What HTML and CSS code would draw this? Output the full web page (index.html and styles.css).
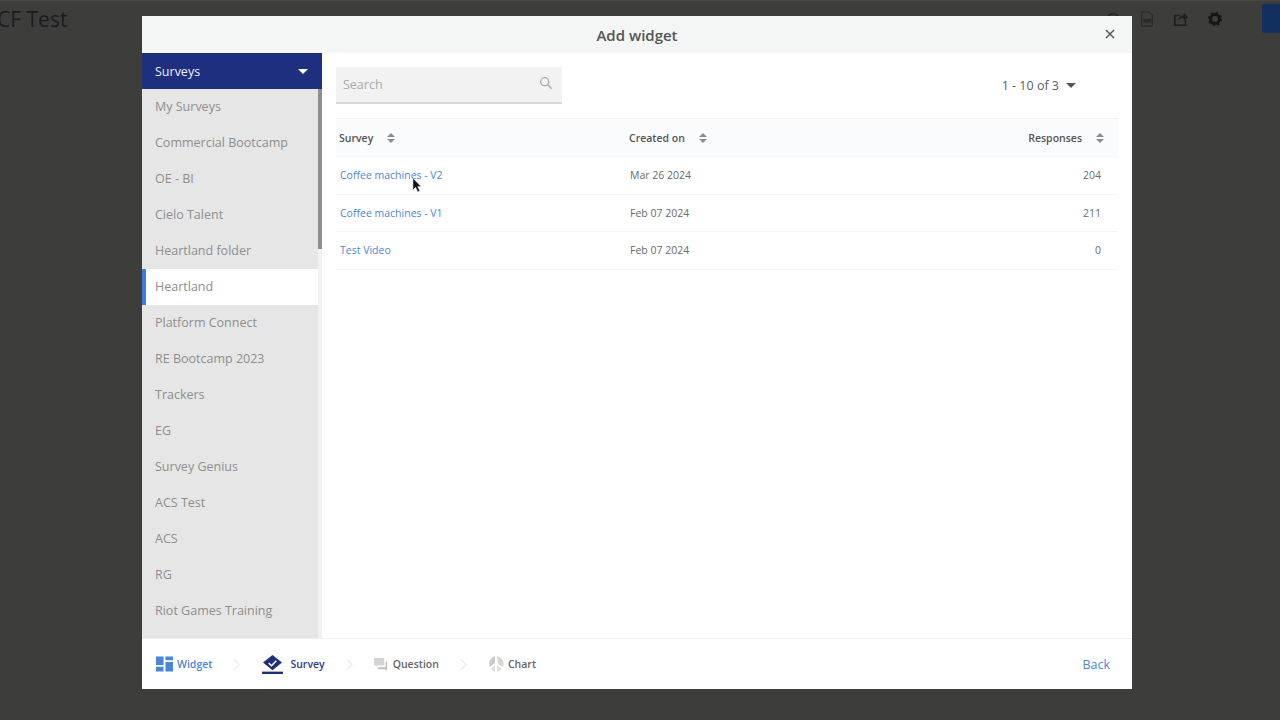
FILE: index.html
```html
<!DOCTYPE html>
<html lang="en">
<head>
<meta charset="utf-8">
<title>Add widget</title>
<link rel="stylesheet" href="styles.css">
</head>
<body>
<header class="topbar">
  <h1 class="page-title">CF Test</h1>
  <div class="top-actions">
    <svg class="top-icon" viewBox="0 0 18 18"><circle cx="9" cy="9" r="6" fill="none" stroke="#262626" stroke-width="2"/></svg>
    <svg class="top-icon" viewBox="0 0 18 18"><path d="M3 1h8l4 4v12H3z" fill="none" stroke="#2a2a2a" stroke-width="1.5"/><path d="M5 9h9v4H5z" fill="#2a2a2a"/></svg>
    <svg class="top-icon" viewBox="0 0 18 18"><path d="M14 10v6H2V5h6" fill="none" stroke="#1f1f1f" stroke-width="1.8"/><path d="M6 11c0-4 3-6 6-6V2l5 5-5 4V8c-3 0-5 1-6 3z" fill="#1f1f1f"/></svg>
    <svg class="top-icon" viewBox="0 0 18 18"><circle cx="9" cy="9" r="5" fill="none" stroke="#161616" stroke-width="3.4"/><circle cx="9" cy="9" r="7" fill="none" stroke="#161616" stroke-width="2" stroke-dasharray="2.6 2.9"/></svg>
    <div class="top-button"></div>
  </div>
</header>

<div class="overlay">
  <section class="modal">
    <header class="modal-head">
      <h2 class="modal-title">Add widget</h2>
      <svg class="close" viewBox="0 0 10 10"><path d="M1 1l8 8M9 1l-8 8" stroke="#555" stroke-width="1.5" fill="none"/></svg>
    </header>
    <div class="modal-body">
      <aside class="sidebar">
        <div class="side-head"><span>Surveys</span><i class="caret caret-white"></i></div>
        <div class="side-scroll">
          <ul class="side-list">
            <li class="side-item">My Surveys</li>
            <li class="side-item">Commercial Bootcamp</li>
            <li class="side-item">OE - BI</li>
            <li class="side-item">Cielo Talent</li>
            <li class="side-item">Heartland folder</li>
            <li class="side-item active">Heartland</li>
            <li class="side-item">Platform Connect</li>
            <li class="side-item">RE Bootcamp 2023</li>
            <li class="side-item">Trackers</li>
            <li class="side-item">EG</li>
            <li class="side-item">Survey Genius</li>
            <li class="side-item">ACS Test</li>
            <li class="side-item">ACS</li>
            <li class="side-item">RG</li>
            <li class="side-item">Riot Games Training</li>
          </ul>
          <div class="scrollbar"><div class="thumb"></div></div>
        </div>
      </aside>
      <main class="content">
        <div class="toolbar">
          <div class="search">
            <span>Search</span>
            <svg class="search-icon" viewBox="0 0 16 16"><circle cx="6.5" cy="6.5" r="4.6" fill="none" stroke="#a9a9a9" stroke-width="1.5"/><path d="M10 10l4.5 4.5" stroke="#a9a9a9" stroke-width="1.8"/></svg>
          </div>
          <div class="pager"><span>1 - 10 of 3</span><i class="caret caret-dark"></i></div>
        </div>
        <div class="table">
          <div class="row row-head">
            <div class="col-a">Survey<i class="sort"></i></div>
            <div class="col-b">Created on<i class="sort"></i></div>
            <div class="col-c">Responses<i class="sort"></i></div>
          </div>
          <div class="row">
            <div class="col-a"><a class="link">Coffee machines - V2</a></div>
            <div class="col-b date">Mar 26 2024</div>
            <div class="col-c num">204</div>
          </div>
          <div class="row">
            <div class="col-a"><a class="link">Coffee machines - V1</a></div>
            <div class="col-b date">Feb 07 2024</div>
            <div class="col-c num">211</div>
          </div>
          <div class="row">
            <div class="col-a"><a class="link">Test Video</a></div>
            <div class="col-b date">Feb 07 2024</div>
            <div class="col-c num">0</div>
          </div>
        </div>
        <svg class="cursor" viewBox="0 0 12 17"><path d="M1 1v13l3-3 2.200 5 2.300-1-2.200-4.800H10z" fill="#111" stroke="#eee" stroke-width=".6"/></svg>
      </main>
    </div>
    <footer class="modal-foot">
      <nav class="steps">
        <div class="step step-widget">
          <svg class="step-icon" viewBox="0 0 18 16"><path d="M0 0h8v9H0zM10 0h8v4h-8zM10 6h8v10h-8zM0 11h8v5H0z" fill="#4a86d8"/></svg>
          <span>Widget</span>
        </div>
        <svg class="chev" viewBox="0 0 8 14"><path d="M1 1l6 6-6 6" fill="none" stroke="#e4e6e8" stroke-width="1.200"/></svg>
        <div class="step step-survey">
          <svg class="step-icon-lg" viewBox="0 0 24 20"><path d="M12 0l10 8-10 8L2 8z" fill="#1f2f80"/><path d="M8 8.500l3 2.800 5-5.300" fill="none" stroke="#fff" stroke-width="1.700"/><rect x="1" y="17.500" width="22" height="2.500" fill="#1f2f80"/></svg>
          <span>Survey</span>
        </div>
        <svg class="chev" viewBox="0 0 8 14"><path d="M1 1l6 6-6 6" fill="none" stroke="#e4e6e8" stroke-width="1.200"/></svg>
        <div class="step step-question">
          <svg class="step-icon" viewBox="0 0 15 14"><path d="M0 0h11v8H4l-2 2V8H0z" fill="#d4d4d4"/><path d="M12.500 4H14v10l-2-2H4v-2h8.500z" fill="#bcbcbc"/></svg>
          <span>Question</span>
        </div>
        <svg class="chev" viewBox="0 0 8 14"><path d="M1 1l6 6-6 6" fill="none" stroke="#e4e6e8" stroke-width="1.200"/></svg>
        <div class="step step-chart">
          <svg class="step-icon-md" viewBox="0 0 16 16"><path d="M7 0v7L2 11A8 8 0 0 1 7 0z" fill="#c9c9c9"/><path d="M9 0a8 8 0 0 1 6 11L10 8z" fill="#d6d6d6"/><path d="M3 12.500L7 9v7a8 8 0 0 1-4-3.500zM9 9l4.500 3.500A8 8 0 0 1 9 16z" fill="#dedede"/></svg>
          <span>Chart</span>
        </div>
      </nav>
      <a class="back">Back</a>
    </footer>
  </section>
</div>
</body>
</html>
```
FILE: styles.css
```css
* { box-sizing: border-box; }
html, body { margin: 0; height: 720px; overflow: hidden; }
body { background: #3d3d3c; font-family: "Open Sans", "Noto Sans", sans-serif; position: relative; }
ul { list-style: none; margin: 0; padding: 0; }

.topbar { height: 36px; display: flex; align-items: center; justify-content: space-between; border-top: 1px solid #4d4a40; }
.page-title { margin: 0 0 0 -3px; font-size: 21px; font-weight: 400; color: #1c1c1c; line-height: 36px; }
.top-actions { display: flex; align-items: center; gap: 18px; }
.top-icon { width: 16px; height: 16px; display: block; }
.top-button { width: 18px; height: 29px; background: #11305f; border-radius: 3px 0 0 3px; margin-left: 21px; }

.overlay { position: absolute; inset: 0; padding: 16px 148px 31px 142px; }
.modal { height: 673px; background: #fff; display: flex; flex-direction: column; }
.modal-head { height: 37px; flex: none; background: #f4f5f5; display: flex; align-items: center; justify-content: center; position: relative; }
.modal-title { margin: 0; font-size: 15px; font-weight: 600; color: #555; }
.close { position: absolute; right: 17px; top: 13px; width: 10px; height: 10px; }

.modal-body { flex: 1; min-height: 0; display: flex; }
.sidebar { width: 180px; flex: none; display: flex; flex-direction: column; }
.side-head { height: 36px; flex: none; background: #1f2f80; color: #eef0f6; font-size: 12.500px; display: flex; align-items: center; justify-content: space-between; padding: 0 14px 0 13px; }
.caret { display: block; width: 0; height: 0; border-left: 5px solid transparent; border-right: 5px solid transparent; }
.caret-white { border-top: 5px solid #fff; }
.caret-dark { border-top: 5px solid #555; }
.side-scroll { flex: 1; min-height: 0; display: flex; overflow: hidden; }
.side-list { width: 176px; flex: none; background: #e6e6e6; }
.side-item { height: 36px; line-height: 36px; padding-left: 13px; font-size: 12.500px; color: #8e8e8e; white-space: nowrap; }
.side-item.active { background: #fff; border-left: 4px solid #3d7fdc; padding-left: 9px; }
.scrollbar { width: 4px; flex: none; background: #f1f1f1; }
.thumb { height: 160px; background: #8f8f8f; }

.content { flex: 1; min-width: 0; padding: 14px 14px 0; position: relative; }
.toolbar { display: flex; justify-content: space-between; align-items: center; height: 37px; }
.search { width: 226px; height: 37px; background: #f2f2f3; border-bottom: 2px solid #d9d9da; display: flex; align-items: center; justify-content: space-between; padding: 0 9px 0 7px; font-size: 12.500px; color: #aaa; }
.search-icon { width: 14px; height: 14px; margin-top: -4px; }
.pager { display: flex; align-items: center; gap: 7px; margin-right: 42px; font-size: 12.500px; color: #606060; }

.table { margin-top: 14px; }
.row { display: flex; align-items: center; height: 37.500px; border-bottom: 1px solid #f2f4f7; font-size: 10.500px; color: #6a6a6a; }
.row-head { height: 39px; background: #fafbfc; border-top: 1px solid #f1f3f6; border-bottom: 1px solid #f1f3f6; font-size: 10.500px; font-weight: 600; color: #555; }
.col-a { width: 291px; padding-left: 3px; display: flex; align-items: center; }
.col-b { width: 200px; padding-left: 3px; display: flex; align-items: center; }
.col-c { flex: 1; display: flex; align-items: center; justify-content: flex-end; padding-right: 15px; }
.row-head .col-c { padding-right: 14px; }
.row-head .col-b { padding-left: 2px; }
.link { color: #4a86d8; margin-left: 1px; }
.date, .num { font-size: 10.500px; }
.date { padding-left: 3px; }
.num { padding-right: 17px; }
.sort { display: block; position: relative; width: 8px; height: 10px; margin-left: 14px; }
.sort::before, .sort::after { content: ""; position: absolute; left: 0; width: 0; height: 0; border-left: 4px solid transparent; border-right: 4px solid transparent; }
.sort::before { top: 0; border-bottom: 4px solid #8c8c8c; }
.sort::after { bottom: 0; border-top: 4px solid #8c8c8c; }

.cursor { position: absolute; left: 90px; top: 124px; width: 11px; height: 16px; }

.modal-foot { height: 51px; flex: none; border-top: 1px solid #eceef0; display: flex; align-items: center; justify-content: space-between; padding: 0 22px 0 14px; }
.steps { display: flex; align-items: center; }
.step { display: flex; align-items: center; font-size: 10.500px; font-weight: 600; color: #666; }
.step-widget { color: #4a86d8; gap: 4px; }
.step-survey { color: #2e3d8a; gap: 6px; }
.step-question { gap: 5px; }
.step-chart { gap: 4px; }
.step-icon { width: 16px; height: 16px; display: block; }
.step-widget .step-icon { width: 17px; }
.step-question .step-icon { width: 14px; height: 13px; }
.step-icon-lg { width: 23px; height: 19px; display: block; }
.step-icon-md { width: 16px; height: 16px; display: block; }
.chev { width: 7px; height: 13px; display: block; margin: 0 21px; }
.chev:nth-of-type(n) { flex: none; }
.back { font-size: 12.500px; color: #4a86d8; }
```
